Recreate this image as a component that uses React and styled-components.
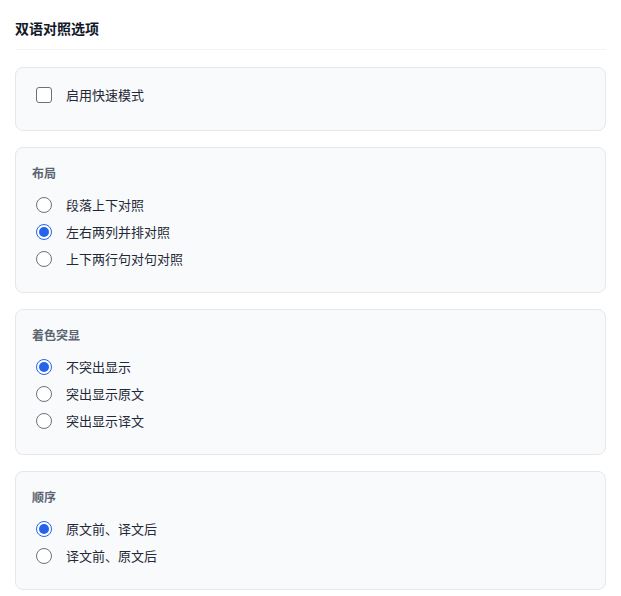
import { useState } from "react";
import styled, { createGlobalStyle } from "styled-components";

const GlobalStyle = createGlobalStyle`
  * { box-sizing: border-box; }
  body {
    margin: 0;
    background: #ffffff;
    font-family: Inter, "Noto Sans CJK SC", sans-serif;
    color: #1f2937;
  }
`;

const Page = styled.div`
  padding: 19px 15px 6px;
`;

const Title = styled.h2`
  margin: 0;
  font-size: 14px;
  line-height: 20px;
  font-weight: 700;
  color: #111827;
  padding-bottom: 10px;
  border-bottom: 1px solid #f3f4f6;
`;

const Sections = styled.div`
  display: flex;
  flex-direction: column;
  gap: 16px;
  margin-top: 17px;
`;

const Card = styled.section`
  background: #f9fafb;
  border: 1px solid #e5e7eb;
  border-radius: 8px;
  padding: ${(p) => (p.$compact ? "13px 20px 22px" : "18px 16px 20px")};
`;

const Label = styled.div`
  font-size: 12px;
  line-height: 16px;
  font-weight: 600;
  color: #5b6472;
  margin-bottom: 9px;
`;

const Option = styled.label`
  display: flex;
  align-items: center;
  gap: 14px;
  height: 27px;
  padding-left: ${(p) => (p.$indent ? "4px" : "0")};
  font-size: 13px;
  color: #1f2937;
  cursor: pointer;
`;

const Box = styled.span`
  width: 16px;
  height: 16px;
  border: 1px solid #6b7280;
  border-radius: 3px;
  background: #ffffff;
  flex-shrink: 0;
`;

const Radio = styled.span`
  position: relative;
  width: 16px;
  height: 16px;
  border-radius: 50%;
  border: 1px solid ${(p) => (p.$on ? "#2563eb" : "#6b7280")};
  background: #ffffff;
  flex-shrink: 0;

  &::after {
    content: "";
    display: ${(p) => (p.$on ? "block" : "none")};
    position: absolute;
    inset: 2px;
    border-radius: 50%;
    background: #2563eb;
  }
`;

const groups = [
  {
    key: "layout",
    label: "布局",
    options: ["段落上下对照", "左右两列并排对照", "上下两行句对句对照"],
    initial: 1,
  },
  {
    key: "highlight",
    label: "着色突显",
    options: ["不突出显示", "突出显示原文", "突出显示译文"],
    initial: 0,
  },
  {
    key: "order",
    label: "顺序",
    options: ["原文前、译文后", "译文前、原文后"],
    initial: 0,
  },
];

function RadioGroup({ group }) {
  const [value, setValue] = useState(group.initial);
  return (
    <Card>
      <Label>{group.label}</Label>
      {group.options.map((text, i) => (
        <Option key={text} $indent onClick={() => setValue(i)}>
          <Radio $on={value === i} />
          {text}
        </Option>
      ))}
    </Card>
  );
}

export default function App() {
  const [fast, setFast] = useState(false);
  return (
    <Page>
      <GlobalStyle />
      <Title>双语对照选项</Title>
      <Sections>
        <Card $compact>
          <Option onClick={() => setFast(!fast)}>
            <Box />
            启用快速模式
          </Option>
        </Card>
        {groups.map((g) => (
          <RadioGroup key={g.key} group={g} />
        ))}
      </Sections>
    </Page>
  );
}
